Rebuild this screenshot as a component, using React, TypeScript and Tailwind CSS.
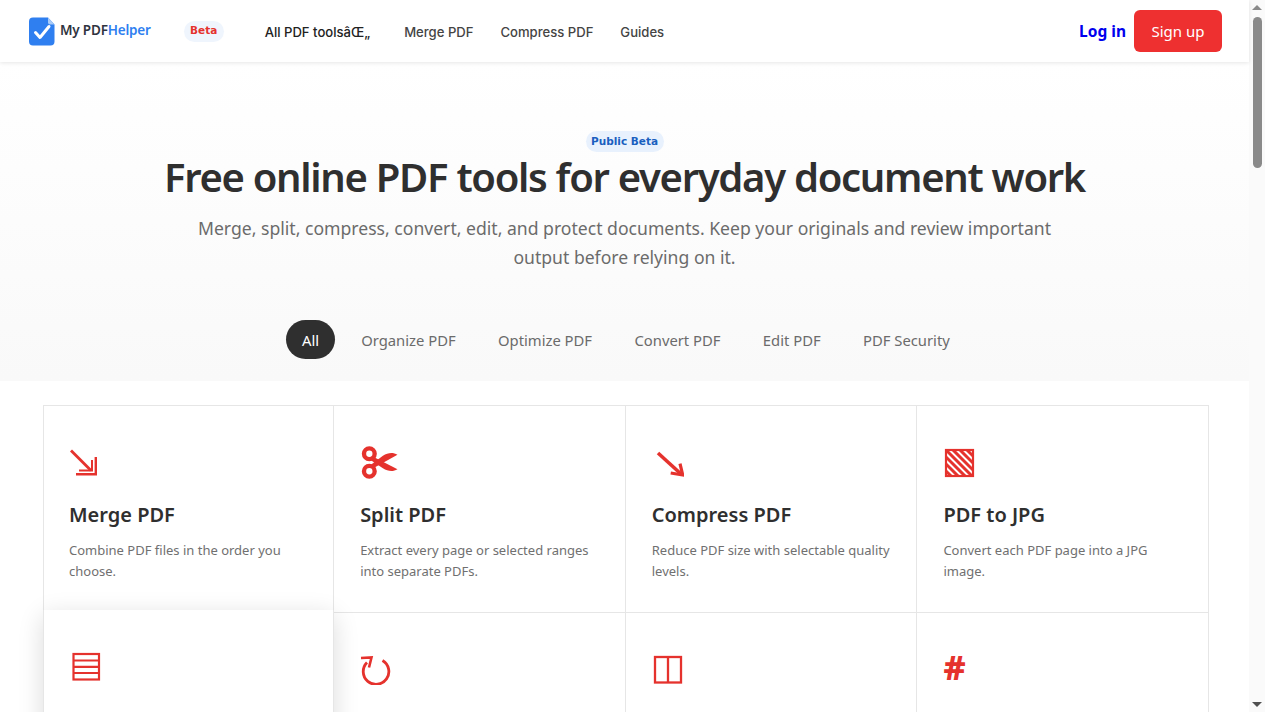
import React from "react";

const ic = "#e5322d";

function Logo() {
  return (
    <svg width="26" height="29" viewBox="0 0 26 29" className="shrink-0">
      <path d="M4 0.5H19L25.5 7.5V24.5A4 4 0 0 1 21.5 28.5H4A4 4 0 0 1 0 24.5V4.500A4 4 0 0 1 4 0.5Z" fill="#2f7ff0" />
      <path d="M19 0.5L25.5 7.500H21A2 2 0 0 1 19 5.500Z" fill="#a9cbf8" />
      <path d="M6.500 15.500L11 20.500L20 9.500" stroke="#fff" strokeWidth="3" fill="none" strokeLinecap="round" strokeLinejoin="round" />
    </svg>
  );
}

const MergeIcon = () => (
  <svg width="30" height="30" viewBox="0 0 30 30">
    <path d="M2 2.500L22 22.500" stroke={ic} strokeWidth="2.800" fill="none" />
    <path d="M7 26.300H26.800V9" stroke={ic} strokeWidth="2.400" fill="none" />
    <path d="M10 22.500H23V12" stroke={ic} strokeWidth="2" fill="none" />
  </svg>
);

const ScissorsIcon = () => (
  <svg width="38" height="33" viewBox="0 0 38 34" className="-mt-[2px] ml-px">
    <circle cx="8" cy="8" r="5.500" stroke={ic} strokeWidth="4.500" fill="none" />
    <circle cx="8" cy="26" r="5.500" stroke={ic} strokeWidth="4.500" fill="none" />
    <path d="M12 11L37 24C32 27 27 26 22 23L10 15Z" fill={ic} />
    <path d="M12 23L37 9C32 6 27 7 22 10L10 19Z" fill={ic} />
  </svg>
);

const CompressIcon = () => (
  <svg width="32" height="30" viewBox="0 0 32 30">
    <path d="M6 5L29 26" stroke={ic} strokeWidth="3.600" fill="none" />
    <path d="M18.700 25L30.700 27L28 15.700" fill="none" stroke={ic} strokeWidth="3.200" />
  </svg>
);

const StripesIcon = () => (
  <svg width="32" height="30" viewBox="0 0 32 30">
    <defs>
      <clipPath id="stripeClip">
        <rect x="3" y="2" width="27" height="26" />
      </clipPath>
    </defs>
    <rect x="3" y="2" width="27" height="26" fill="#fff" />
    <g clipPath="url(#stripeClip)" stroke={ic} strokeWidth="3">
      <path d="M-18 2L10 30M-11 2L17 30M-4 2L24 30M3 2L31 30M10 2L38 30M17 2L45 30M24 2L52 30" />
    </g>
    <rect x="3" y="2" width="27" height="26" fill="none" stroke={ic} strokeWidth="2.200" />
  </svg>
);

const LinesIcon = () => (
  <svg width="32" height="30" viewBox="0 0 32 30">
    <rect x="3.500" y="2" width="25.500" height="25.500" fill="none" stroke={ic} strokeWidth="2.200" />
    <path d="M3.500 8.500H29M3.500 14.800H29M3.500 21H29" stroke={ic} strokeWidth="2.200" />
  </svg>
);

const RotateIcon = () => (
  <svg width="31" height="30" viewBox="0 0 31 30">
    <path d="M22.500 5.500A12.800 12.800 0 1 1 7 7.500" fill="none" stroke={ic} strokeWidth="2.800" />
    <path d="M1 3L11.500 2.500L9 12.500" fill="none" stroke={ic} strokeWidth="2.600" />
  </svg>
);

const ColumnsIcon = () => (
  <svg width="32" height="30" viewBox="0 0 32 30">
    <rect x="3" y="2" width="26" height="25.500" fill="none" stroke={ic} strokeWidth="2.300" />
    <path d="M16 2V27.500" stroke={ic} strokeWidth="2.300" />
  </svg>
);

const tabs = ["Organize PDF", "Optimize PDF", "Convert PDF", "Edit PDF", "PDF Security"];

const row1 = [
  { icon: <MergeIcon />, title: "Merge PDF", desc: "Combine PDF files in the order you choose." },
  { icon: <ScissorsIcon />, title: "Split PDF", desc: "Extract every page or selected ranges into separate PDFs." },
  { icon: <CompressIcon />, title: "Compress PDF", desc: "Reduce PDF size with selectable quality levels." },
  { icon: <StripesIcon />, title: "PDF to JPG", desc: "Convert each PDF page into a JPG image." },
];

function Card({ icon, title, desc, first }: { icon: React.ReactNode; title: string; desc: string; first: boolean }) {
  return (
    <div className={`h-[207px] border-b border-r border-[#e6e6e6] pr-[22px] pt-[39px] ${first ? "border-l pl-[25.500px]" : "pl-[26px]"}`}>
      <div className="flex h-[36px] items-center">{icon}</div>
      <h3 className="mt-[20px] text-[20px] font-semibold leading-[28px] text-[#2f2f2f]">{title}</h3>
      <p className="mt-[11px] text-[13px] leading-[21px] text-[#707070]">{desc}</p>
    </div>
  );
}

function Scrollbar() {
  return (
    <div className="flex h-[712px] w-[16px] shrink-0 flex-col items-center bg-[#fafafa]">
      <div className="mt-[5px] h-0 w-0 border-x-[5px] border-b-[5px] border-x-transparent border-b-[#8a8a8a]" />
      <div className="mt-[7px] h-[151px] w-[9px] rounded-full bg-[#8a8a8a]" />
      <div className="flex-1" />
      <div className="mb-[5px] h-0 w-0 border-x-[5px] border-t-[5px] border-x-transparent border-t-[#505050]" />
    </div>
  );
}

export default function App() {
  return (
    <div className="flex h-[712px] overflow-hidden bg-white font-['Noto_Sans',sans-serif]">
      <main className="min-w-0 flex-1">
        <header className="relative z-10 flex h-[62px] items-center bg-white pl-[29px] pr-[27px] shadow-[0_1px_4px_rgba(0,0,0,0.10)]">
          <div className="flex items-center gap-[5px]">
            <Logo />
            <span className="-translate-y-px text-[13.500px] font-semibold tracking-[-0.2px] text-[#2f3440]">
              My PDF<span className="text-[#2f7ff0]">Helper</span>
            </span>
          </div>
          <span className="ml-[33px] flex h-[21px] w-[40px] items-center justify-center rounded-full bg-[#eff5fd] font-['DejaVu_Sans',sans-serif] text-[10.500px] font-bold text-[#e5322d]">
            Beta
          </span>
          <nav className="ml-[41px] flex items-center gap-[27px] pt-[3px] font-['Inter',sans-serif] text-[13.100px] font-medium text-[#444]">
            <span className="mr-[7px] text-[#222]">All PDF toolsâŒ„</span>
            <span>Merge PDF</span>
            <span>Compress PDF</span>
            <span>Guides</span>
          </nav>
          <div className="ml-auto flex items-center gap-[8px]">
            <a href="#" className="pt-[2px] text-[15.500px] font-bold text-[#0000ee]">Log in</a>
            <button className="h-[42px] w-[88px] rounded-[6px] bg-[#ee3030] text-[15px] text-white">Sign up</button>
          </div>
        </header>

        <section className="flex h-[319px] flex-col items-center bg-gradient-to-b from-white to-[#f9f9f9] pt-[69px]">
          <span className="flex h-[21px] w-[78px] items-center justify-center rounded-full bg-[#e8f1fd] font-['DejaVu_Sans',sans-serif] text-[10.500px] font-bold text-[#1a5fc0]">
            Public Beta
          </span>
          <h1 className="text-[40px] font-semibold leading-[50px] tracking-[-1.300px] text-[#2f2f2f]">
            Free online PDF tools for everyday document work
          </h1>
          <p className="mt-[12px] w-[880px] text-center text-[17.600px] leading-[29px] text-[#6b6b6b]">
            Merge, split, compress, convert, edit, and protect documents. Keep your originals and review important output before relying on it.
          </p>
          <div className="ml-[3px] mt-[48px] flex items-center gap-[10px] text-[14.800px] text-[#6b6b6b]">
            <span className="flex h-[39px] w-[49px] items-center justify-center rounded-full bg-[#2f2f2f] pt-px text-white">All</span>
            {tabs.map((t) => (
              <span key={t} className="px-[16.200px] pt-px">{t}</span>
            ))}
          </div>
        </section>

        <section className="pl-[42.500px] pr-[40px] pt-[24px]">
          <div className="border-t border-[#e6e6e6]">
            <div className="grid grid-cols-4">
              {row1.map((c, i) => (
                <Card key={c.title} icon={c.icon} title={c.title} desc={c.desc} first={i === 0} />
              ))}
            </div>
            <div className="grid grid-cols-4">
              <div className="relative z-10 h-[208px] -translate-y-[3px] border-x border-[#e6e6e6] bg-white pl-[26px] pt-[42px] shadow-[0_6px_24px_rgba(0,0,0,0.14)]">
                <LinesIcon />
              </div>
              <div className="h-[208px] border-r border-[#e6e6e6] pl-[26px] pt-[42px]"><RotateIcon /></div>
              <div className="h-[208px] border-r border-[#e6e6e6] pl-[26px] pt-[42px]"><ColumnsIcon /></div>
              <div className="h-[208px] border-r border-[#e6e6e6] pl-[26px] pt-[27px] text-[34px] font-extrabold leading-[54px] text-[#e5322d]">#</div>
            </div>
          </div>
        </section>
      </main>
      <Scrollbar />
    </div>
  );
}
